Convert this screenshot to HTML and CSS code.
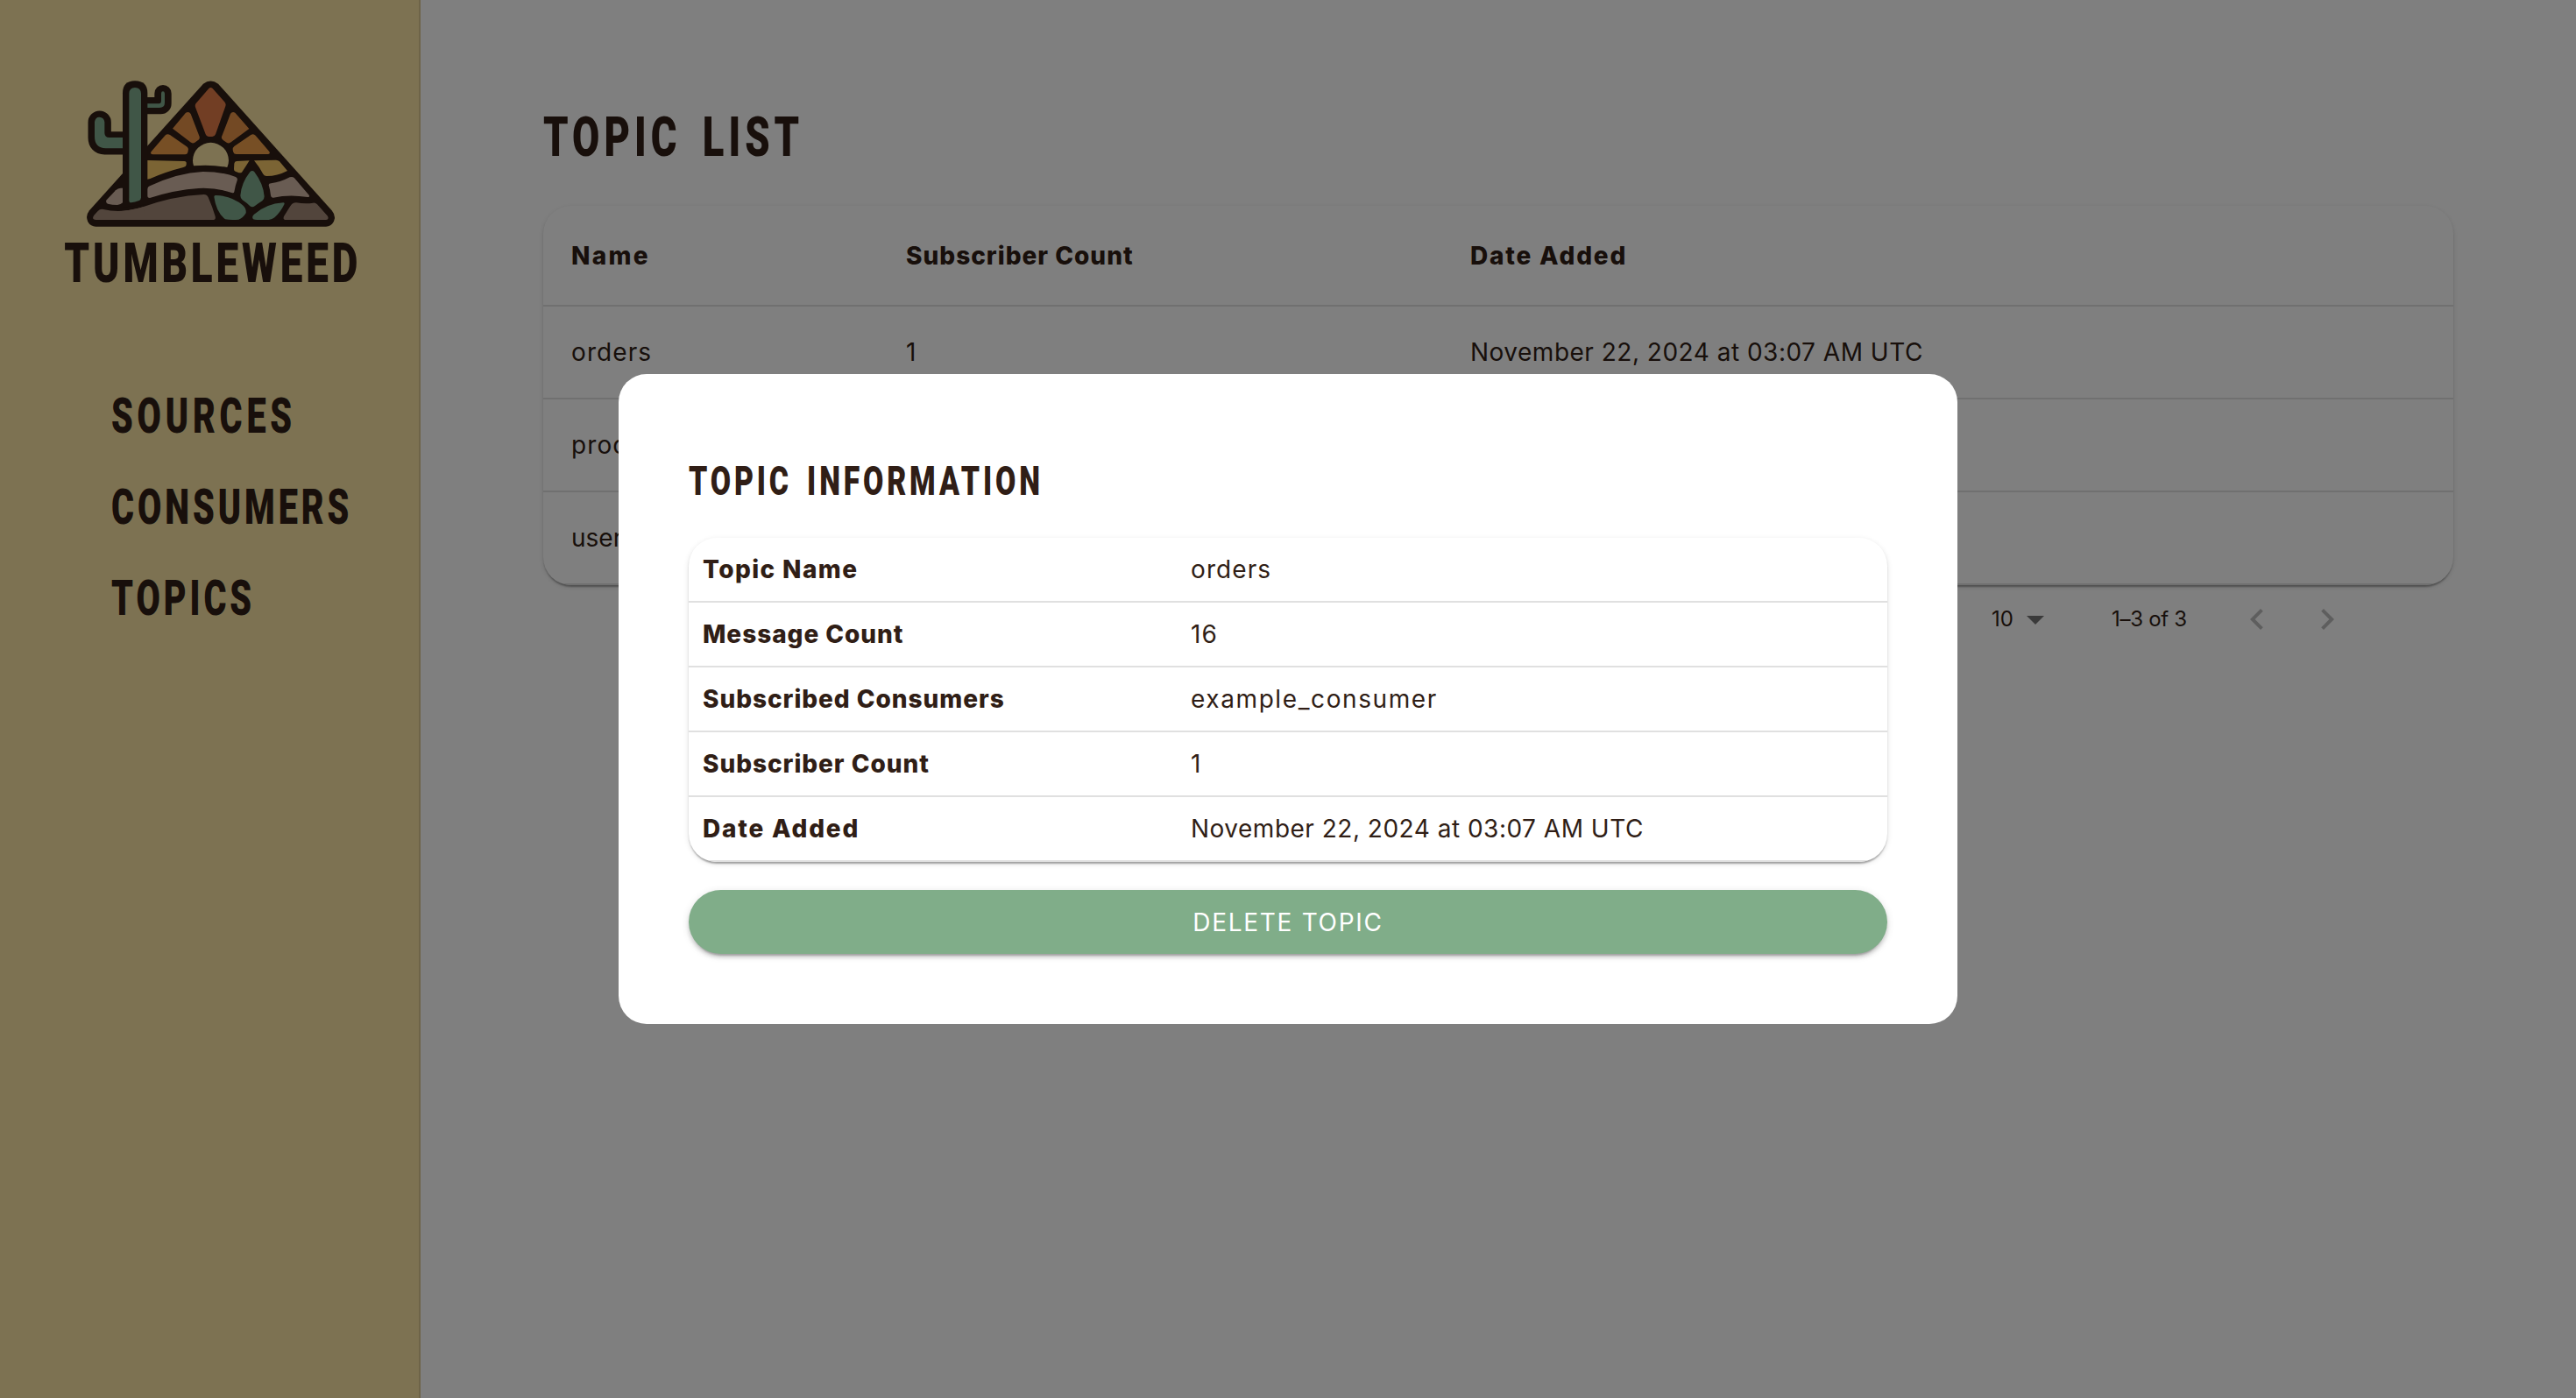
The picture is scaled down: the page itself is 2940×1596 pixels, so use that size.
FILE: index.html
```html
<!DOCTYPE html>
<html lang="en">
<head>
<meta charset="utf-8">
<title>Tumbleweed – Topics</title>
<link rel="stylesheet" href="styles.css">
</head>
<body>
<div class="app">
  <aside class="sidebar">
    <svg class="logo" viewBox="0 0 1140 810" role="img" aria-label="Tumbleweed">
      <!-- triangle silhouette -->
      <path class="ink" d="M546 77Q571 58 597 77L986 511Q997 524 996 538Q992 564 966 566H178Q150 564 147 534Q148 521 156 511Z"/>
      <!-- sun and rays -->
      <path class="sun" d="M513 358Q510 350 510 340A61 61 0 0 1 633 340Q633 352 628 363Q570 352 513 358Z"/>
      <path class="ray-top" d="M565 93Q571 87 578 93L618 138Q625 145 622 154L588 250Q585 258 577 258H564Q557 258 554 250L520 160Q516 150 521 144Z"/>
      <path class="ray-mid" d="M486 176Q497 170 503 180L533 258Q535 267 527 271L517 278Q509 283 502 277L441 230Z"/>
      <path class="ray-mid" d="M655 176Q645 170 639 180L609 258Q607 265 614 270L626 278Q634 283 641 277L703 231Z"/>
      <path class="ray-low" d="M415 254Q423 247 432 252L488 291Q497 297 494 306L493 312Q491 319 484 319H374Q362 318 368 309Z"/>
      <path class="ray-low" d="M725 254Q718 246 709 252L652 291Q645 296 647 304L649 311Q651 318 659 318H767Q777 317 772 309Z"/>
      <path class="glow" d="M354 339L481 342Q490 343 488 352V355Q487 361 478 363Q418 378 364 402L354 404Z"/>
      <path class="glow" d="M660 342L704 340Q692 360 678 380Q672 384 664 380L656 377Q650 374 651 368L652 350Q653 343 660 342Z"/>
      <path class="glow" d="M720 340L795 338Q802 338 807 343L834 375Q800 393 763 393Q755 393 751 386Q738 362 720 340Z"/>
      <!-- dunes -->
      <path class="dune-far" d="M363 427Q458 382 545 378Q610 378 657 396Q665 400 662 408Q655 427 652 447Q651 453 643 450Q590 432 530 435Q450 440 363 468Q354 468 354 460V440Q354 431 363 427Z"/>
      <path class="dune-far" d="M778 418Q810 414 842 397Q852 394 858 400L908 458Q912 465 903 465Q840 455 786 467Q778 468 777 460Q775 440 770 424Q770 418 778 418Z"/>
      <path class="dune-far" d="M215 475L246 442Q254 434 263 434H270V484Q262 492 252 492Q234 492 219 488Q210 484 215 475Z"/>
      <path class="dune-near" d="M172 527L185 513Q193 504 204 507Q260 521 330 502Q440 461 548 456Q558 456 563 466Q576 495 587 531Q590 543 580 543H178Q162 541 172 527Z"/>
      <path class="dune-near" d="M822 531L843 497Q851 484 864 484Q895 489 922 485Q930 484 936 490L972 530Q978 542 965 543H826Q818 541 822 531Z"/>
      <!-- agave leaves -->
      <path class="leaf" d="M706 379Q714 371 721 379Q752 420 755 463Q755 472 748 478Q735 486 722 496Q714 502 706 496Q694 484 680 475Q673 469 673 460Q676 417 706 379Z"/>
      <path class="leaf" d="M588 459Q643 460 681 493Q694 504 692 520Q682 537 667 542Q642 545 621 541Q590 516 583 464Q583 459 588 459Z"/>
      <path class="leaf" d="M820 484Q760 488 719 525Q711 534 717 541Q722 543 730 543H770Q782 542 790 535Q812 514 824 488Q824 484 820 484Z"/>
      <!-- cactus -->
      <path class="arm-ink" stroke-width="79" d="M280 280H208Q191 280 191 262V209"/>
      <path class="arm-ink" stroke-width="58" d="M345 152H400Q408 152 408 144V110"/>
      <path class="ink" d="M270 500V109Q270 67 312 67Q355 67 355 109V490Z"/>
      <path class="arm" d="M270 298H212Q174 296 174 258V208Q176 191 190 191Q206 192 208 208V246Q209 261 224 261H270Z"/>
      <path class="arm" d="M355 159H396Q414 159 414 142V110Q413 103 408 103Q402 103 402 110V136Q402 145 394 145H355Z"/>
      <path class="arm" d="M292 110Q293 90 312 90Q332 91 333 110V466Q333 474 326 477Q312 482 299 484Q292 484 292 476Z"/>
      <path class="dune-near" d="M240 514Q290 514 340 499L345 520H240Z"/>
      <text class="wordmark" transform="translate(70 757) scale(.72 1)">TUMBLEWEED</text>
    </svg>
    <nav class="nav">
      <a class="display nav-link">SOURCES</a>
      <a class="display nav-link">CONSUMERS</a>
      <a class="display nav-link">TOPICS</a>
    </nav>
  </aside>
  <main class="content">
    <h1 class="display page-title">TOPIC LIST</h1>
    <div class="paper topics">
      <div class="row head"><span class="cell wide">Name</span><span class="cell">Subscriber Count</span><span class="cell airy">Date Added</span></div>
      <div class="row"><span class="cell">orders</span><span class="cell">1</span><span class="cell date">November 22, 2024 at 03:07 AM UTC</span></div>
      <div class="row"><span class="cell">products</span><span class="cell"></span><span class="cell"></span></div>
      <div class="row"><span class="cell tight">users</span><span class="cell"></span><span class="cell"></span></div>
    </div>
    <div class="pagination">
      <span class="page-size">10</span>
      <svg class="icon caret" viewBox="0 0 24 24"><path d="m7 10 5 5 5-5z"/></svg>
      <span class="range">1–3 of 3</span>
      <svg class="icon step" viewBox="0 0 24 24"><path d="M15.41 16.59 10.83 12l4.58-4.59L14 6l-6 6 6 6z"/></svg>
      <svg class="icon step" viewBox="0 0 24 24"><path d="M8.59 16.59 13.17 12 8.59 7.41 10 6l6 6-6 6z"/></svg>
    </div>
  </main>
</div>
<div class="backdrop">
  <section class="modal" role="dialog">
    <h2 class="display modal-title">TOPIC INFORMATION</h2>
    <div class="paper info">
      <div class="pair"><b class="topic">Topic Name</b><span>orders</span></div>
      <div class="pair"><b>Message Count</b><span>16</span></div>
      <div class="pair"><b>Subscribed Consumers</b><span class="long">example_consumer</span></div>
      <div class="pair"><b>Subscriber Count</b><span>1</span></div>
      <div class="pair"><b class="airy">Date Added</b><span class="date">November 22, 2024 at 03:07 AM UTC</span></div>
    </div>
    <button class="delete">DELETE TOPIC</button>
  </section>
</div>
</body>
</html>
```
FILE: styles.css
```css
* { box-sizing: border-box; }

body {
  margin: 0;
  background: #fff;
  color: #301e16;
  font: 400 28px/40px Inter, "Liberation Sans", sans-serif;
  letter-spacing: 1.1px;
}

.app { display: flex; height: 1596px; overflow: hidden; }

/* Condensed display lettering */
.display {
  margin: 0;
  font-family: Roboto, "Liberation Sans", sans-serif;
  font-weight: 900;
  white-space: nowrap;
  transform: scaleX(.72);
  transform-origin: 0 0;
}

/* Sidebar */
.sidebar {
  display: flex;
  flex-direction: column;
  flex: none;
  gap: 83px;
  width: 480px;
  padding-top: 70px;
  background: #fae4a4;
  border-right: 2px solid #dcc890;
}
.logo { width: 380px; height: 270px; margin-left: 50px; }
.ink { fill: #301e16; }
.sun { fill: #fae4a4; }
.ray-top { fill: #e47c48; }
.ray-mid { fill: #e69248; }
.ray-low { fill: #ee9e4a; }
.glow { fill: #f6c868; }
.dune-far { fill: #d2b8a6; }
.dune-near { fill: #a48a78; }
.leaf, .arm { fill: #80ad8e; }
.arm-ink { fill: none; stroke: #301e16; stroke-linecap: round; }
.wordmark {
  fill: #301e16;
  font: 900 191px Roboto, "Liberation Sans", sans-serif;
  letter-spacing: 16px;
}
.nav { display: flex; flex-direction: column; padding-left: 127px; }
.nav-link { font-size: 55px; line-height: 104px; letter-spacing: 5.5px; }
.nav-link:first-child { letter-spacing: 6.7px; }

/* Topic list */
.content { flex: none; width: 2320px; padding: 115px 0 0 140px; }
.page-title { margin-bottom: 36px; font-size: 63px; line-height: 84px; letter-spacing: 7px; word-spacing: 11px; }

.paper {
  overflow: hidden;
  border-radius: 32px;
  background: #fff;
  box-shadow: 0 4px 2px -2px rgba(0,0,0,.2), 0 2px 2px rgba(0,0,0,.14), 0 2px 6px rgba(0,0,0,.12);
}
.topics { padding-top: 1px; }
.row {
  display: grid;
  grid-template-columns: 382px 644px 1fr;
  align-items: center;
  height: 106px;
  border-bottom: 2px solid #e0e0e0;
}
.head { height: 114px; font-weight: 800; letter-spacing: 1px; }
.cell { padding: 0 32px; }
.wide { letter-spacing: 2.3px; }
.airy { letter-spacing: 1.8px; }
.topic { letter-spacing: 1.4px; }
.date { letter-spacing: .5px; }
.long { letter-spacing: 1.6px; }
.tight { letter-spacing: 0; }

.pagination {
  display: flex;
  align-items: center;
  height: 78px;
  padding-left: 1653px;
  font-size: 24px;
  letter-spacing: -.3px;
}
.page-size { width: 26px; letter-spacing: 0; }
.range { width: 142px; margin-left: 63px; }
.icon { flex: none; width: 48px; height: 48px; }
.caret { fill: rgba(0,0,0,.54); }
.step { fill: rgba(0,0,0,.26); }
.step + .step { margin-left: 32px; }

/* Modal */
.backdrop {
  position: absolute;
  inset: 0;
  display: flex;
  align-items: center;
  justify-content: center;
  background: rgba(0,0,0,.5);
}
.modal {
  width: 1528px;
  padding: 80px;
  border-radius: 32px;
  background: #fff;
}
.modal-title { margin-bottom: 23px; font-size: 47px; line-height: 84px; letter-spacing: 5.3px; word-spacing: 7px; }
.pair {
  display: grid;
  grid-template-columns: 557px 1fr;
  align-items: center;
  height: 74px;
  border-bottom: 2px solid #e0e0e0;
}
.pair > * { padding-left: 16px; }
.pair b { font-weight: 800; }
.pair b:not([class]) { letter-spacing: .95px; }
.delete {
  display: block;
  width: 100%;
  height: 73px;
  margin-top: 32px;
  padding: 0;
  border: 0;
  border-radius: 40px;
  background: #80ad89;
  color: #fff;
  font: inherit;
  letter-spacing: 1.7px;
  box-shadow: 0 6px 2px -4px rgba(0,0,0,.2), 0 4px 4px rgba(0,0,0,.14), 0 2px 10px rgba(0,0,0,.12);
}
```
